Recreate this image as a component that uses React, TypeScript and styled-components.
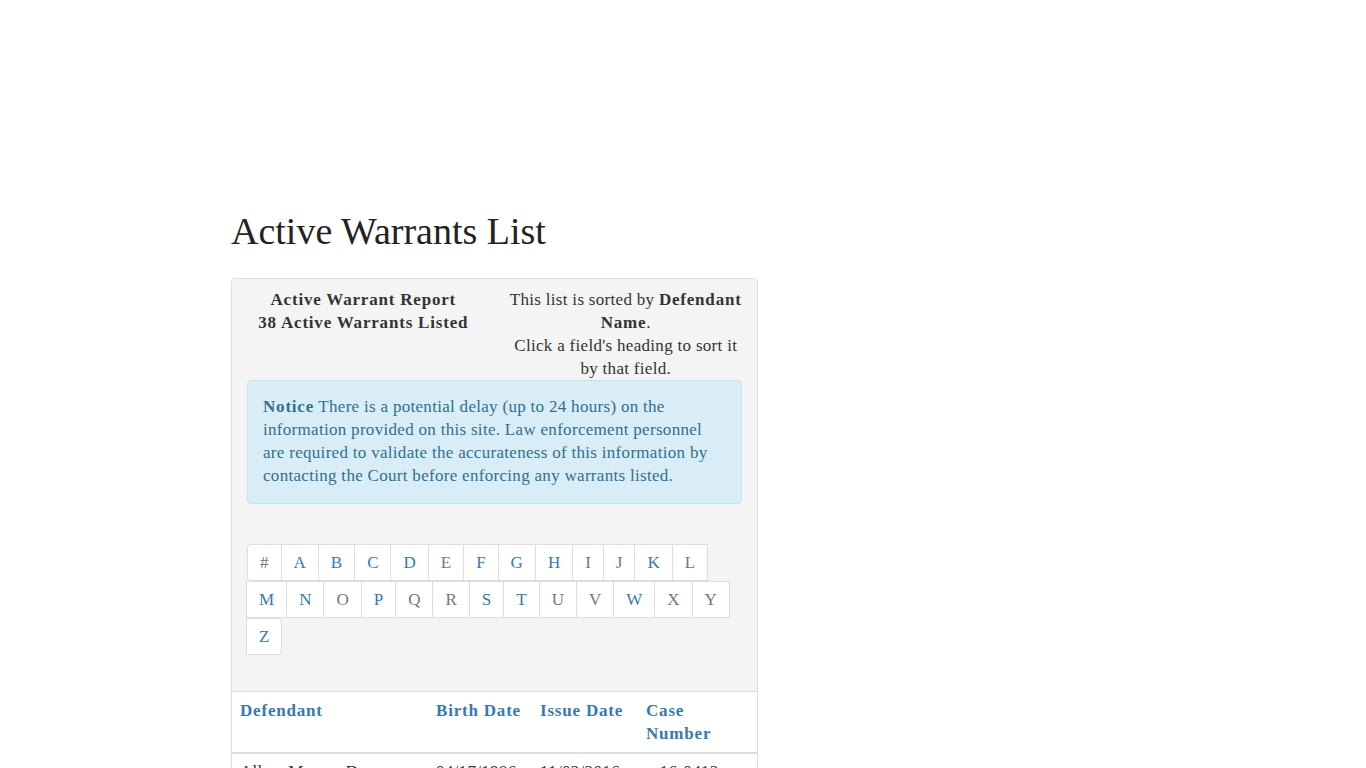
import React from 'react';
import styled, { createGlobalStyle } from 'styled-components';

const GlobalStyle = createGlobalStyle`
  html, body {
    margin: 0;
    padding: 0;
    background: #fff;
  }
  body {
    font-family: "Liberation Serif", "Times New Roman", serif;
    font-size: 17px;
    line-height: 23px;
    letter-spacing: 0.3px;
    color: #333;
  }
  b, strong {
    letter-spacing: 0.8px;
  }
`;

const Banner = styled.header`
  height: 191px;
`;

const Main = styled.main`
  width: 527px;
  margin: 0 0 0 231px;
`;

const Title = styled.h1`
  margin: 20px 0 26px;
  font-size: 38px;
  line-height: 41px;
  font-weight: normal;
  letter-spacing: 0;
  color: #222;
`;

const Panel = styled.section`
  border: 1px solid #ddd;
  border-radius: 4px 4px 0 0;
  background: #fff;
`;

const PanelHeading = styled.div`
  background: #f4f4f4;
  padding: 9px 15px 16px;
  border-bottom: 1px solid #ddd;
  border-radius: 3px 3px 0 0;
`;

const Summary = styled.div`
  display: grid;
  grid-template-columns: 1fr 1fr;
  column-gap: 30px;
  text-align: center;
`;

const Notice = styled.div`
  padding: 14px 15px 16px;
  background: #d9edf7;
  border: 1px solid #bce8f1;
  border-radius: 4px;
  color: #31708f;
`;

const Letters = styled.ul`
  display: flex;
  flex-wrap: wrap;
  list-style: none;
  margin: 40px 0 20px;
  padding: 0;
`;

const Letter = styled.li<{ $active: boolean; $first: boolean; $last: boolean }>`
  margin-left: ${(p) => (p.$first ? '0' : '-1px')};
  padding: 6px 12px;
  border: 1px solid #ddd;
  background: #fff;
  letter-spacing: 0;
  color: ${(p) => (p.$active ? '#337ab7' : '#777')};
  cursor: ${(p) => (p.$active ? 'pointer' : 'default')};
  border-radius: ${(p) => (p.$first ? '4px 0 0 4px' : p.$last ? '0 4px 4px 0' : '0')};
`;

const Table = styled.table`
  width: 100%;
  table-layout: fixed;
  border-collapse: collapse;
`;

const HeadCell = styled.th<{ $width: number }>`
  box-sizing: border-box;
  width: ${(p) => p.$width}px;
  padding: 7px 8px 7px;
  text-align: left;
  vertical-align: top;
  color: #337ab7;
  letter-spacing: 0.8px;
  border-bottom: 2px solid #ddd;
  cursor: pointer;
`;

const Cell = styled.td`
  padding: 6px 8px 8px;
  vertical-align: top;
  border-top: 1px solid #ddd;
`;

const letters = '#ABCDEFGHIJKLMNOPQRSTUVWXYZ'.split('');
const withWarrants = new Set('ABCDFGHKMNPSTWZ'.split(''));

const columns = [
  { label: 'Defendant', width: 196 },
  { label: 'Birth Date', width: 104 },
  { label: 'Issue Date', width: 106 },
  { label: 'Case Number', width: 119 },
];

const warrants = [
  ['Allen, Marcus D', '04/17/1986', '11/02/2016', 'cr16-0412'],
  ['Baker, Tanya L', '09/03/1991', '06/21/2017', 'tr17-1180'],
  ['Carter, Devon R', '12/28/1979', '02/14/2018', 'cr18-0073'],
  ['Dunn, Kelly A', '07/09/1994', '08/30/2018', 'tr18-2291'],
  ['Fisher, Roy T', '01/15/1972', '03/05/2019', 'cr19-0158'],
];

const App: React.FC = () => {
  return (
    <>
      <GlobalStyle />
      <Banner />
      <Main>
        <Title>Active Warrants List</Title>
        <Panel>
          <PanelHeading>
            <Summary>
              <div>
                <b>Active Warrant Report</b>
                <br />
                <b>38 Active Warrants Listed</b>
              </div>
              <div>
                This list is sorted by <b>Defendant Name</b>.
                <br />
                Click a field's heading to sort it by that field.
              </div>
            </Summary>
            <Notice>
              <b>Notice</b> There is a potential delay (up to 24 hours) on the information
              provided on this site. Law enforcement personnel are required to validate the
              accurateness of this information by contacting the Court before enforcing any
              warrants listed.
            </Notice>
            <Letters>
              {letters.map((l, i) => (
                <Letter
                  key={l}
                  $active={withWarrants.has(l)}
                  $first={i === 0}
                  $last={i === letters.length - 1}
                >
                  {l}
                </Letter>
              ))}
            </Letters>
          </PanelHeading>
          <Table>
            <thead>
              <tr>
                {columns.map((c) => (
                  <HeadCell key={c.label} $width={c.width}>
                    {c.label}
                  </HeadCell>
                ))}
              </tr>
            </thead>
            <tbody>
              {warrants.map((row) => (
                <tr key={row[3]}>
                  {row.map((v, i) => (
                    <Cell key={i}>{v}</Cell>
                  ))}
                </tr>
              ))}
            </tbody>
          </Table>
        </Panel>
      </Main>
    </>
  );
};

export default App;
